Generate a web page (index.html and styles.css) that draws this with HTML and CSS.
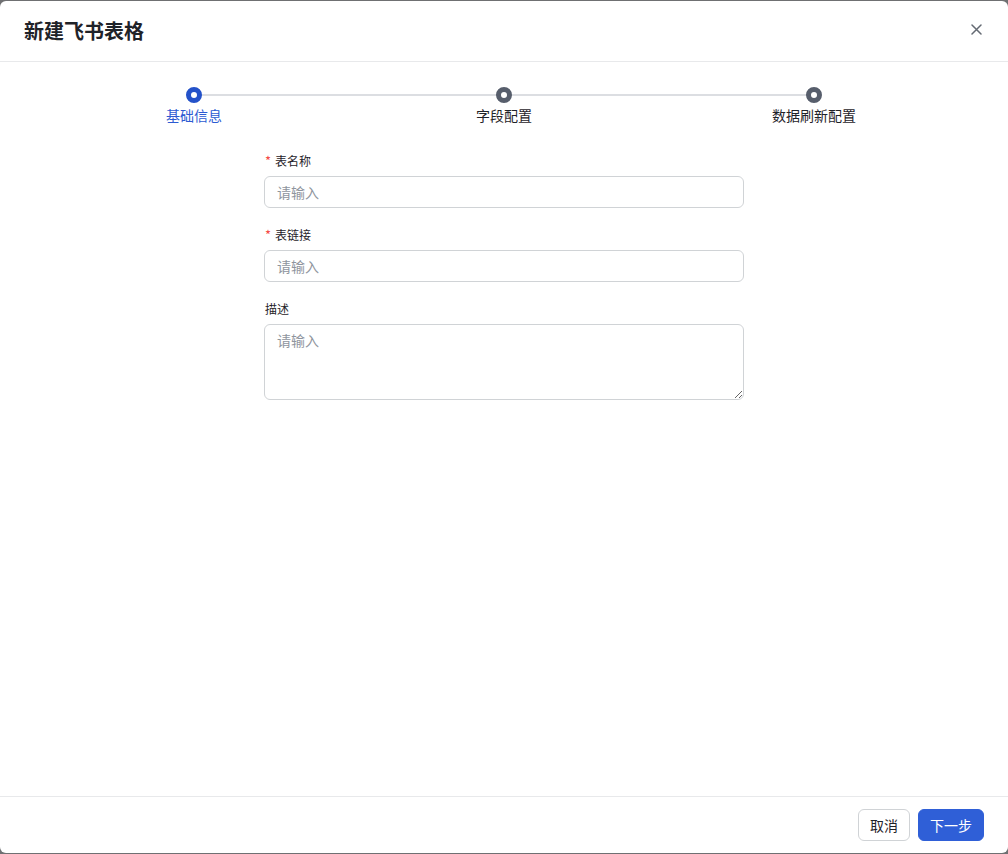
FILE: index.html
```html
<!DOCTYPE html>
<html lang="zh-CN">
<head>
<meta charset="utf-8">
<title>新建飞书表格</title>
<link rel="stylesheet" href="styles.css">
</head>
<body>
<div class="modal">
  <div class="modal-header">
    <h1 class="modal-title">新建飞书表格</h1>
    <button class="close-btn" aria-label="关闭">
      <svg width="11" height="11" viewBox="0 0 11 11"><path d="M1 1L10 10M10 1L1 10" stroke="#646a73" stroke-width="1.5" stroke-linecap="round"/></svg>
    </button>
  </div>
  <div class="modal-body">
    <div class="steps">
      <div class="step step-active">
        <div class="step-track"><span class="line line-right"></span><span class="dot"></span></div>
        <div class="step-label">基础信息</div>
      </div>
      <div class="step">
        <div class="step-track"><span class="line line-left"></span><span class="line line-right"></span><span class="dot"></span></div>
        <div class="step-label">字段配置</div>
      </div>
      <div class="step">
        <div class="step-track"><span class="line line-left"></span><span class="dot"></span></div>
        <div class="step-label">数据刷新配置</div>
      </div>
    </div>
    <form class="form">
      <div class="form-item">
        <label class="form-label"><span class="req">*</span>表名称</label>
        <input class="input" type="text" placeholder="请输入">
      </div>
      <div class="form-item">
        <label class="form-label"><span class="req">*</span>表链接</label>
        <input class="input" type="text" placeholder="请输入">
      </div>
      <div class="form-item">
        <label class="form-label">描述</label>
        <textarea class="textarea" placeholder="请输入"></textarea>
      </div>
    </form>
  </div>
  <div class="modal-footer">
    <button class="btn btn-default">取消</button>
    <button class="btn btn-primary">下一步</button>
  </div>
</div>
</body>
</html>
```
FILE: styles.css
```css
* { box-sizing: border-box; }
html, body { margin: 0; padding: 0; height: 100%; }
body {
  background: #6f7072;
  font-family: "Noto Sans CJK SC", "Noto Sans", sans-serif;
  color: #1f2329;
  padding-top: 1px;
}
.modal {
  width: 1008px;
  height: 852px;
  background: #fff;
  border-radius: 6px;
  display: flex;
  flex-direction: column;
  overflow: hidden;
}
.modal-header {
  height: 61px;
  border-bottom: 1px solid #e8e9eb;
  display: flex;
  align-items: center;
  justify-content: space-between;
  padding: 0 24px;
  flex-shrink: 0;
}
.modal-title {
  margin: 0;
  font-size: 20px;
  font-weight: 600;
  line-height: 28px;
  color: #1f2329;
  padding-bottom: 1px;
}
.close-btn {
  border: 0;
  background: none;
  padding: 0;
  width: 16px;
  height: 16px;
  display: flex;
  align-items: center;
  justify-content: center;
  margin-right: 0;
  margin-bottom: 4px;
  cursor: pointer;
}
.modal-body {
  flex: 1;
  padding-top: 25px;
}
.steps {
  display: grid;
  grid-template-columns: repeat(3, 310px);
  justify-content: center;
}
.step {
  display: flex;
  flex-direction: column;
  align-items: center;
}
.step-track {
  position: relative;
  width: 100%;
  height: 16px;
  display: flex;
  justify-content: center;
}
.line {
  position: absolute;
  top: 7px;
  height: 2px;
  background: #dcdee2;
}
.line-left { left: 0; right: 50%; }
.line-right { left: 50%; right: 0; }
.dot {
  position: relative;
  width: 16px;
  height: 16px;
  border-radius: 50%;
  border: 5px solid #575e6c;
  background: #fff;
}
.step-active .dot { border-color: #2452c9; }
.step-label {
  margin-top: 2px;
  font-size: 14px;
  line-height: 20px;
  color: #1f2329;
}
.step-active .step-label { color: #2d5bd2; }
.form {
  width: 480px;
  margin: 26px auto 0;
  display: flex;
  flex-direction: column;
  gap: 17px;
}
.form-item {
  display: flex;
  flex-direction: column;
  gap: 5px;
}
.form-label {
  font-size: 12px;
  line-height: 20px;
  color: #1f2329;
  padding-left: 1px;
}
.req {
  color: #f54a45;
  margin-right: 4px;
  font-size: 13px;
}
.input, .textarea {
  width: 480px;
  border: 1px solid #d0d3d6;
  border-radius: 6px;
  font-family: inherit;
  font-size: 14px;
  color: #1f2329;
  padding: 0 12px;
  outline: none;
  background: #fff;
}
.input { height: 32px; line-height: 30px; }
.textarea {
  height: 76px;
  padding: 4px 12px;
  line-height: 22px;
  resize: vertical;
  display: block;
}
.input::placeholder, .textarea::placeholder { color: #8f959e; }
.modal-footer {
  flex-shrink: 0;
  border-top: 1px solid #e8e9eb;
  padding: 12px 24px 12px;
  display: flex;
  justify-content: flex-end;
  gap: 8px;
}
.btn {
  height: 32px;
  border-radius: 6px;
  font-family: inherit;
  font-size: 14px;
  padding: 0 11px;
  cursor: pointer;
}
.btn-default {
  background: #fff;
  border: 1px solid #d0d3d6;
  color: #1f2329;
}
.btn-primary {
  background: #2f5fd7;
  border: 1px solid #2f5fd7;
  color: #fff;
}
```
